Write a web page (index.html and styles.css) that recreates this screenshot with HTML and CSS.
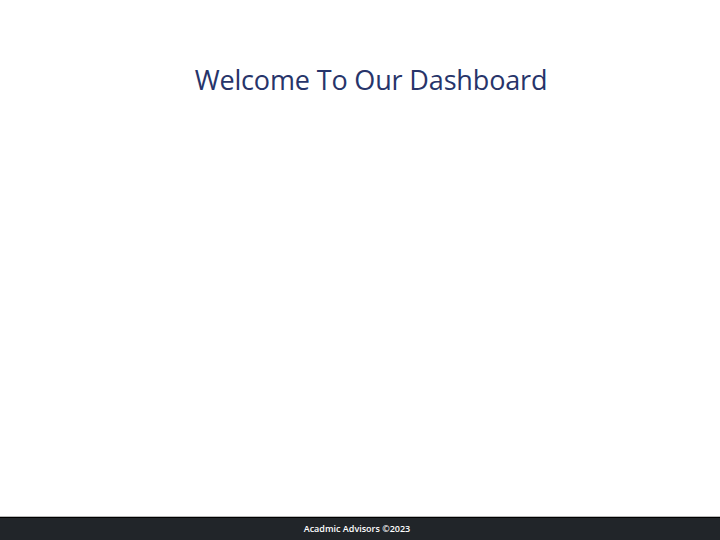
FILE: index.html
```html
<!DOCTYPE html>
<html>
<head>
<meta charset="utf-8">
<link rel="stylesheet" href="styles.css">
</head>
<body>
<main class="content">
  <h1 class="title">Welcome To Our Dashboard</h1>
</main>
<footer class="footer">Acadmic Advisors ©2023</footer>
</body>
</html>
```
FILE: styles.css
```css
html, body {
  margin: 0;
  height: 100%;
}
body {
  display: flex;
  flex-direction: column;
  background: #fff;
  font-family: "Open Sans", "Noto Sans", sans-serif;
}
.content {
  flex: 1;
  display: flex;
  justify-content: center;
  padding-left: 22px;
}
.title {
  margin: 60px 0 0;
  font-size: 27px;
  font-weight: 400;
  color: #27346a;
  line-height: 40px;
  letter-spacing: -0.15px;
}
.footer {
  height: 22px;
  border-top: 1px solid #b9b9b9;
  box-shadow: inset 0 1px 0 #000;
  background: #212529;
  color: #fff;
  font-size: 9px;
  font-weight: 600;
  display: flex;
  align-items: center;
  justify-content: center;
  padding-bottom: 1px;
  padding-right: 6px;
}
```
